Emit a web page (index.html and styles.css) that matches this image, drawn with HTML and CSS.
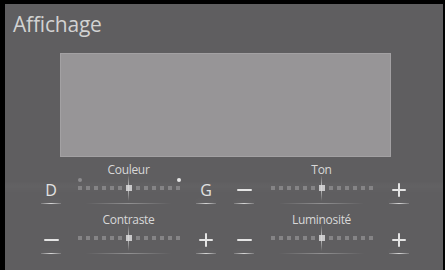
FILE: index.html
```html
<!DOCTYPE html>
<html lang="fr">
<head>
<meta charset="utf-8">
<title>Affichage</title>
<link rel="stylesheet" href="styles.css">
</head>
<body>
<div class="screen">
  <div class="title">Affichage</div>
  <div class="preview"></div>
  <div class="controls">
    <div class="group">
      <div class="label">Couleur</div>
      <div class="row">
        <div class="btn"><span class="letter">D</span></div>
        <div class="slider ends">
          <span class="pip pip-l"></span><span class="pip pip-r"></span>
          <i></i><i></i><i></i><i></i><i></i><i></i><b></b><i></i><i></i><i></i><i></i><i></i><i></i>
        </div>
        <div class="btn"><span class="letter">G</span></div>
      </div>
    </div>
    <div class="group">
      <div class="label">Ton</div>
      <div class="row">
        <div class="btn"><span class="minus"></span></div>
        <div class="slider">
          <i></i><i></i><i></i><i></i><i></i><i></i><b></b><i></i><i></i><i></i><i></i><i></i><i></i>
        </div>
        <div class="btn"><span class="plus"></span></div>
      </div>
    </div>
    <div class="group">
      <div class="label">Contraste</div>
      <div class="row">
        <div class="btn"><span class="minus"></span></div>
        <div class="slider">
          <i></i><i></i><i></i><i></i><i></i><i></i><b></b><i></i><i></i><i></i><i></i><i></i><i></i>
        </div>
        <div class="btn"><span class="plus"></span></div>
      </div>
    </div>
    <div class="group">
      <div class="label">Luminosité</div>
      <div class="row">
        <div class="btn"><span class="minus"></span></div>
        <div class="slider">
          <i></i><i></i><i></i><i></i><i></i><i></i><b></b><i></i><i></i><i></i><i></i><i></i><i></i>
        </div>
        <div class="btn"><span class="plus"></span></div>
      </div>
    </div>
  </div>
</div>
</body>
</html>
```

FILE: styles.css
```css
html, body {
  margin: 0;
  padding: 0;
  background: #000;
}
body {
  width: 445px;
  height: 270px;
  overflow: hidden;
}
.screen {
  margin: 4px 2px 0 5px;
  width: 438px;
  height: 266px;
  background: #5f5e60;
  display: flex;
  flex-direction: column;
  font-family: "Open Sans", "Noto Sans", sans-serif;
  color: #d4d4d4;
}
.title {
  height: 49px;
  box-sizing: border-box;
  padding: 6px 0 0 8px;
  font-size: 21px;
  line-height: 28px;
  letter-spacing: -0.2px;
  color: #d2d2d2;
}
.preview {
  margin-left: 55px;
  width: 331px;
  height: 104px;
  box-sizing: border-box;
  background: #979597;
  border: 1px solid #a3a1a3;
}
.controls {
  margin-top: 6px;
  padding-left: 33px;
  display: grid;
  grid-template-columns: 181px 181px;
  column-gap: 12px;
  row-gap: 9px;
  background: linear-gradient(to bottom, transparent 18px, rgba(255,255,255,0.025) 23px, transparent 30px);
}
.group {
  display: flex;
  flex-direction: column;
}
.label {
  height: 14px;
  line-height: 14px;
  font-size: 12px;
  text-align: center;
  color: #d8d8d8;
  letter-spacing: -0.3px;
}
.row {
  height: 27px;
  display: flex;
  align-items: stretch;
}
.btn {
  width: 26px;
  position: relative;
  display: flex;
  align-items: center;
  justify-content: center;
  padding-bottom: 1px;
}
.btn::after {
  content: "";
  position: absolute;
  left: 3px;
  right: 3px;
  bottom: 0;
  height: 1px;
  background: linear-gradient(to right, rgba(230,230,230,0.2), rgba(235,235,235,0.85), rgba(230,230,230,0.2));
  box-shadow: 0 -2px 5px rgba(255,255,255,0.12);
}
.letter {
  font-size: 16px;
  line-height: 16px;
  color: #e2e2e2;
}
.minus {
  display: block;
  width: 15px;
  height: 2px;
  background: #e4e4e4;
  border-radius: 1px;
}
.plus {
  display: block;
  width: 14px;
  height: 14px;
  position: relative;
}
.plus::before, .plus::after {
  content: "";
  position: absolute;
  background: #e4e4e4;
  border-radius: 1px;
}
.plus::before {
  left: 0; right: 0; top: 6px; height: 2px;
}
.plus::after {
  top: 0; bottom: 0; left: 6px; width: 2px;
}
.slider {
  flex: 1;
  position: relative;
  display: flex;
  align-items: center;
  justify-content: center;
  gap: 4px;
  padding-bottom: 5px;
}
.slider::after {
  content: "";
  position: absolute;
  left: 22px;
  right: 22px;
  bottom: 0;
  height: 1px;
  background: linear-gradient(to right, rgba(220,220,220,0), rgba(220,220,220,0.4), rgba(220,220,220,0));
}
.slider i {
  display: block;
  width: 4px;
  height: 4px;
  background: #858486;
}
.slider b {
  display: block;
  width: 6px;
  height: 6px;
  background: #c9c8ca;
  position: relative;
}
.slider b::before {
  content: "";
  position: absolute;
  left: 2.5px;
  width: 1px;
  top: -10px;
  bottom: -10px;
  background: linear-gradient(to bottom, rgba(220,220,220,0), rgba(220,220,220,0.7) 40%, rgba(220,220,220,0.7) 60%, rgba(220,220,220,0));
}
.pip {
  position: absolute;
  top: 1px;
  width: 4px;
  height: 4px;
  border-radius: 50%;
}
.pip-l {
  left: 14px;
  background: #8d8c8e;
}
.pip-r {
  right: 12px;
  background: #e6e6e6;
}
```
